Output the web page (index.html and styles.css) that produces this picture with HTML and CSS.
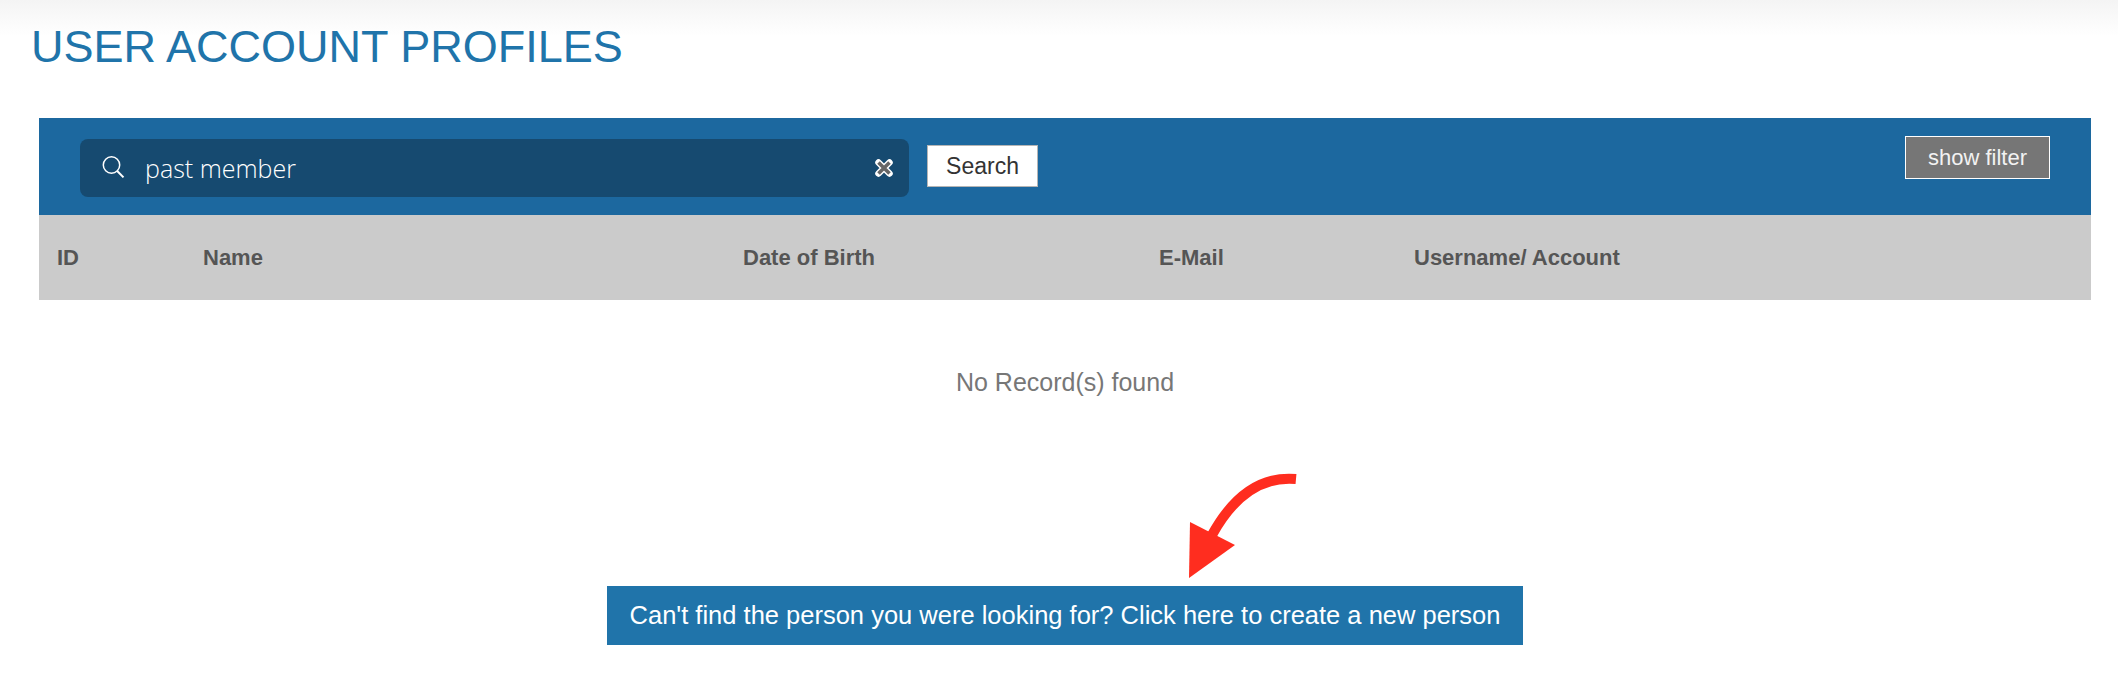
FILE: index.html
```html
<!DOCTYPE html>
<html lang="en">
<head>
<meta charset="utf-8">
<title>User Account Profiles</title>
<link rel="stylesheet" href="styles.css">
</head>
<body>
<div class="page">
  <h1 class="title">USER ACCOUNT PROFILES</h1>
  <section class="panel">
    <div class="toolbar">
      <div class="search-box">
        <svg class="search-icon" width="24" height="24" viewBox="0 0 24 24" fill="none" stroke="#fff" stroke-width="1.5"><circle cx="10.5" cy="10" r="8.2"/><path d="M16.2 16 L22.5 22.4" stroke-width="2"/></svg>
        <span class="search-text">past member</span>
        <svg class="clear-icon" width="20" height="20" viewBox="0 0 20 20"><path d="M4.5 4.5 L15.5 15.5 M15.5 4.5 L4.5 15.5" stroke="#fff" stroke-width="6.5" stroke-linecap="round"/><path d="M4.5 4.5 L15.5 15.5 M15.5 4.5 L4.5 15.5" stroke="#666" stroke-width="3.6"/></svg>
      </div>
      <button class="search-btn">Search</button>
      <button class="filter-btn">show filter</button>
    </div>
    <div class="thead">
      <div class="col col-id">ID</div>
      <div class="col col-name">Name</div>
      <div class="col col-dob">Date of Birth</div>
      <div class="col col-mail">E-Mail</div>
      <div class="col col-user">Username/ Account</div>
    </div>
    <p class="empty">No Record(s) found</p>
    <div class="cta-row">
      <svg class="arrow" width="120" height="110" viewBox="0 0 120 110"><path d="M122 13 C88 10 60 29 38 69" fill="none" stroke="#ff2d1f" stroke-width="10"/><path d="M16 56 L61 79 L15 112 Z" fill="#ff2d1f"/></svg>
      <a class="cta">Can't find the person you were looking for? Click here to create a new person</a>
    </div>
  </section>
</div>
</body>
</html>
```
FILE: styles.css
```css
* { box-sizing: border-box; }
html, body { margin: 0; padding: 0; }
body {
  height: 682px;
  overflow: hidden;
  background: linear-gradient(to bottom, #f4f4f4 0, #ffffff 36px);
  font-family: "Liberation Sans", Arial, sans-serif;
}
.page { padding: 22px 27px 0 39px; }
.title {
  margin: 0 0 0 -8px;
  height: 96px;
  font-size: 45px;
  line-height: 50px;
  font-weight: 400;
  color: #2074aa;
}
.toolbar {
  height: 97px;
  background: #1c689f;
  display: flex;
  align-items: flex-start;
  padding: 21px 41px 0 41px;
}
.search-box {
  width: 829px;
  height: 58px;
  background: #164a70;
  border-radius: 8px;
  display: flex;
  align-items: center;
  padding: 0 15px 0 21px;
  color: #fff;
}
.search-icon { flex: none; margin-top: -2px; }
.search-text {
  margin-left: 20px;
  flex: 1;
  font-family: "Open Sans", sans-serif;
  font-weight: 300;
  font-size: 25px;
}
.clear-icon { flex: none; }
.search-btn {
  margin: 6px 0 0 18px;
  width: 111px;
  height: 42px;
  padding: 0;
  background: #fff;
  border: 1px solid #b5b5b5;
  color: #333;
  font-family: inherit;
  font-size: 23px;
}
.filter-btn {
  margin: -3px 0 0 auto;
  width: 145px;
  height: 43px;
  padding: 0;
  background: #767676;
  border: 1px solid #fff;
  color: #f2f2f2;
  font-family: inherit;
  font-size: 22px;
}
.thead {
  height: 85px;
  background: #cbcbcb;
  display: grid;
  grid-template-columns: 164px 540px 416px 255px 1fr;
  align-items: center;
  color: #555;
  font-size: 22px;
  font-weight: 700;
}
.col-id { padding-left: 18px; }
.empty {
  margin: 68px 0 0;
  text-align: center;
  font-size: 25px;
  line-height: 28px;
  color: #777;
}
.cta-row {
  position: relative;
  display: flex;
  justify-content: center;
  margin-top: 190px;
}
.cta {
  display: block;
  width: 916px;
  height: 59px;
  line-height: 59px;
  text-align: center;
  background: #2074aa;
  color: #fff;
  font-size: 25.5px;
}
.arrow {
  position: absolute;
  left: 1135px;
  top: -120px;
  overflow: visible;
}
```
